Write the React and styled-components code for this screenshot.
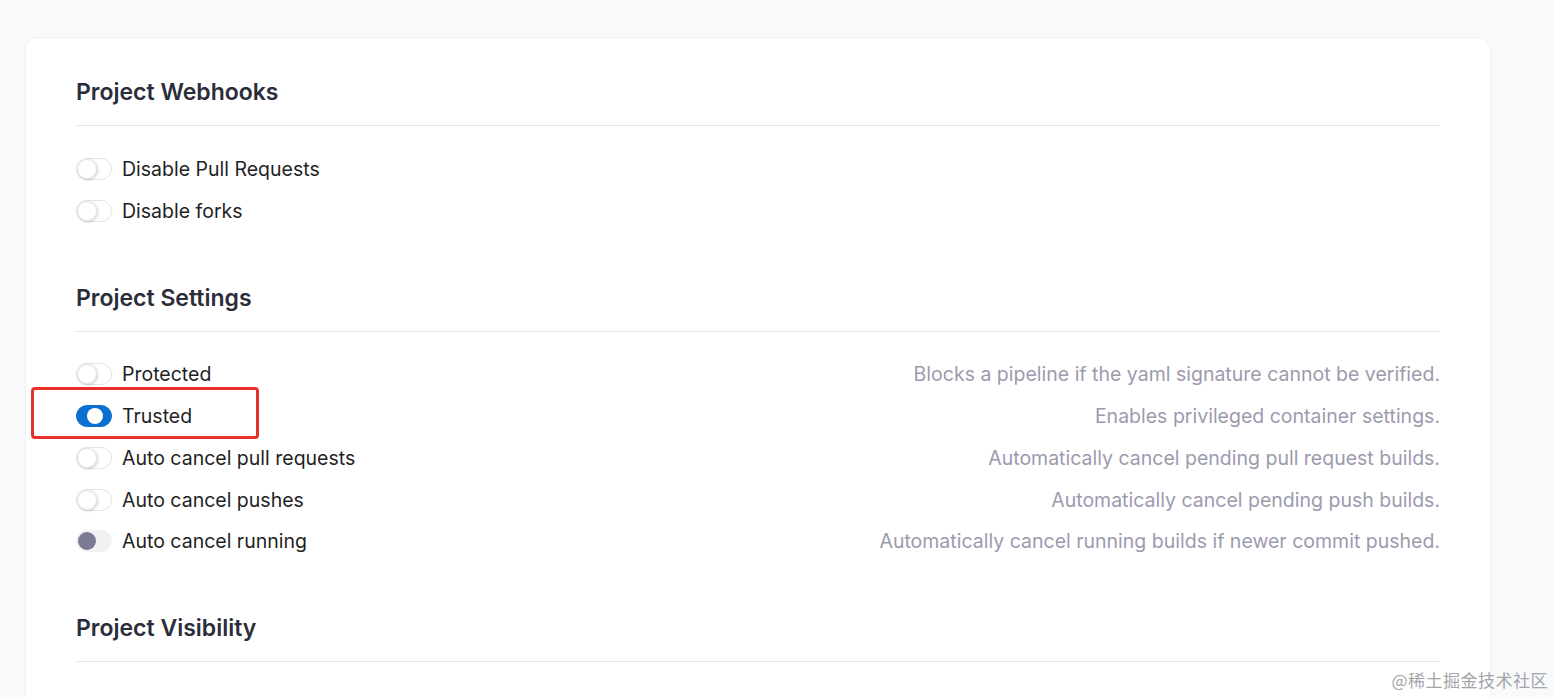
import React from "react";
import styled, { createGlobalStyle } from "styled-components";

const GlobalStyle = createGlobalStyle`
    html, body {
        margin: 0;
        padding: 0;
        background: #f8f9fb;
        font-family: Inter, "Noto Sans", sans-serif;
        overflow: hidden;
    }
`;

const sections = [
    {
        title: "Project Webhooks",
        rows: [
            { label: "Disable Pull Requests", state: "off" },
            { label: "Disable forks", state: "off" },
        ],
    },
    {
        title: "Project Settings",
        rows: [
            {
                label: "Protected",
                state: "off",
                desc: "Blocks a pipeline if the yaml signature cannot be verified.",
            },
            {
                label: "Trusted",
                state: "on",
                desc: "Enables privileged container settings.",
                marked: true,
            },
            {
                label: "Auto cancel pull requests",
                state: "off",
                desc: "Automatically cancel pending pull request builds.",
            },
            {
                label: "Auto cancel pushes",
                state: "off",
                desc: "Automatically cancel pending push builds.",
            },
            {
                label: "Auto cancel running",
                state: "disabled",
                desc: "Automatically cancel running builds if newer commit pushed.",
            },
        ],
    },
    {
        title: "Project Visibility",
        rows: [],
    },
];

function App() {
    return (
        <Page>
            <GlobalStyle />
            <Card>
                {sections.map((section) => (
                    <Section key={section.title}>
                        <Title>{section.title}</Title>
                        {section.rows.length > 0 && (
                            <Rows>
                                {section.rows.map((row) => (
                                    <Row key={row.label}>
                                        <Left>
                                            <Switch state={row.state}>
                                                <Knob state={row.state} />
                                            </Switch>
                                            <Label>{row.label}</Label>
                                            {row.marked && <Highlight />}
                                        </Left>
                                        {row.desc && <Desc>{row.desc}</Desc>}
                                    </Row>
                                ))}
                            </Rows>
                        )}
                    </Section>
                ))}
            </Card>
            <Watermark>@稀土掘金技术社区</Watermark>
        </Page>
    );
}

export default App;

const Page = styled.div`
    position: relative;
    height: 697px;
    padding: 37px 0 0 25px;
    box-sizing: border-box;
`;
const Card = styled.div`
    width: 1466px;
    min-height: 700px;
    box-sizing: border-box;
    background: #ffffff;
    border: 1px solid #eceef2;
    border-radius: 12px;
    padding: 40px 50px 0 50px;
`;
const Section = styled.div`
    margin-bottom: 52px;
`;
const Title = styled.h3`
    margin: 0;
    font-size: 23px;
    line-height: 28px;
    font-weight: 600;
    color: #2b2d3b;
    padding-bottom: 19px;
    border-bottom: 1px solid #e5e6ea;
`;
const Rows = styled.div`
    margin-top: 22px;
    display: flex;
    flex-direction: column;
`;
const Row = styled.div`
    height: 41.75px;
    display: flex;
    align-items: center;
    justify-content: space-between;
`;
const Left = styled.div`
    position: relative;
    display: flex;
    align-items: center;
    gap: 10px;
`;
const Switch = styled.div`
    position: relative;
    width: 36px;
    height: 22px;
    box-sizing: border-box;
    border-radius: 11px;
    background: ${(p) =>
        p.state === "on" ? "#0b6fd0" : p.state === "disabled" ? "#f1f1f4" : "#ffffff"};
    border: 1px solid
        ${(p) => (p.state === "on" ? "#0b6fd0" : p.state === "disabled" ? "#f1f1f4" : "#e3e4e8")};
`;
const Knob = styled.span`
    position: absolute;
    top: 0px;
    left: 0px;
    width: 20px;
    height: 20px;
    border-radius: 50%;
    box-sizing: border-box;
    background: ${(p) => (p.state === "disabled" ? "#7b7a93" : "#ffffff")};
    box-shadow: ${(p) =>
        p.state === "off" ? "1px 1px 3px rgba(0, 0, 0, 0.18)" : "none"};
    border: ${(p) => (p.state === "off" ? "1px solid #e6e6ea" : "none")};
    ${(p) => p.state === "disabled" && "top: 1px; left: 1px; width: 18px; height: 18px;"}
    ${(p) => p.state === "on" && "top: 2px; left: 10px; width: 16px; height: 16px;"}
`;
const Label = styled.span`
    font-size: 19.5px;
    line-height: 24px;
    color: #1f1f24;
`;
const Desc = styled.span`
    font-size: 19.5px;
    line-height: 24px;
    color: #9b9bae;
`;
const Highlight = styled.div`
    position: absolute;
    left: -45px;
    top: -17px;
    width: 228px;
    height: 52px;
    box-sizing: border-box;
    border: 3px solid #e8302a;
    border-radius: 4px;
`;
const Watermark = styled.div`
    position: absolute;
    right: 6px;
    bottom: 5px;
    font-family: "Noto Sans CJK SC", sans-serif;
    font-size: 17px;
    color: #a4a4aa;
    letter-spacing: 0.5px;
`;
